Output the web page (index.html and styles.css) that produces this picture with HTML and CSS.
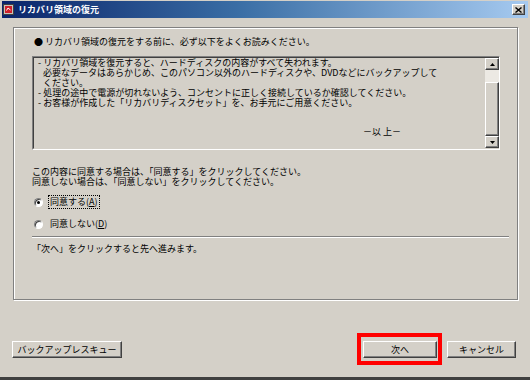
FILE: index.html
```html
<!DOCTYPE html>
<html lang="ja">
<head>
  <meta charset="UTF-8" />
  <title>リカバリ領域の復元</title>
  <link rel="stylesheet" href="styles.css">
</head>
<body>

  <div class="window">
    <!-- Title bar -->
    <div class="titlebar">
      <svg class="app-icon" width="11" height="11" viewBox="0 0 11 11">
        <rect x="0.5" y="0.5" width="10" height="10" fill="#c8c4bc" stroke="#404040"/>
        <rect x="2" y="2" width="7" height="7" fill="#d0202a"/>
        <path d="M3.5 6.5 L5 4 L7.5 6" stroke="#fff" stroke-width="1" fill="none"/>
      </svg>
      <span class="title">リカバリ領域の復元</span>
      <button class="close-btn" type="button">
        <svg width="7" height="6" viewBox="0 0 7 6">
          <path d="M0.5 0.5 L6.5 5.5 M6.5 0.5 L0.5 5.5" stroke="#000" stroke-width="1.4"/>
        </svg>
      </button>
    </div>

    <div class="window-body">
      <!-- Main panel -->
      <div class="panel">
        <p class="lead">● リカバリ領域の復元をする前に、必ず以下をよくお読みください。</p>

        <div class="textbox">
          <div class="textbox-text">
            <div class="line">- リカバリ領域を復元すると、ハードディスクの内容がすべて失われます。</div>
            <div class="line indent">必要なデータはあらかじめ、このパソコン以外のハードディスクや、DVDなどにバックアップして</div>
            <div class="line indent">ください。</div>
            <div class="line">- 処理の途中で電源が切れないよう、コンセントに正しく接続しているか確認してください。</div>
            <div class="line">- お客様が作成した「リカバリディスクセット」を、お手元にご用意ください。</div>
            <div class="line ijou">－以 上－</div>
          </div>
          <div class="scrollbar">
            <div class="sb-btn">
              <svg width="5" height="3" viewBox="0 0 5 3"><path d="M2.5 0 L5 3 L0 3 Z" fill="#000"/></svg>
            </div>
            <div class="sb-track"></div>
            <div class="sb-thumb"></div>
            <div class="sb-btn">
              <svg width="5" height="3" viewBox="0 0 5 3"><path d="M0 0 L5 0 L2.5 3 Z" fill="#000"/></svg>
            </div>
          </div>
        </div>

        <p class="agree-note">
          この内容に同意する場合は、「同意する」をクリックしてください。<br>
          同意しない場合は、「同意しない」をクリックしてください。
        </p>

        <div class="radios">
          <label class="radio">
            <span class="radio-dot checked"></span>
            <span class="radio-label focused">同意する(<u>A</u>)</span>
          </label>
          <label class="radio">
            <span class="radio-dot"></span>
            <span class="radio-label">同意しない(<u>D</u>)</span>
          </label>
        </div>

        <hr class="separator">

        <p class="next-note">「次へ」をクリックすると先へ進みます。</p>
      </div>

      <!-- Buttons -->
      <div class="actions">
        <button class="btn btn-backup" type="button">バックアップレスキュー</button>
        <div class="actions-right">
          <button class="btn btn-next" type="button">次へ</button>
          <button class="btn btn-cancel" type="button">キャンセル</button>
        </div>
      </div>
    </div>
  </div>

</body>
</html>
```

FILE: styles.css
```css
/* === Page === */
body {
  margin: 0;
  background: #d4d0c8;
  font-family: "Noto Sans CJK JP", "Noto Sans", sans-serif;
  font-size: 9px;
  color: #000;
}

p {
  margin: 0;
}

/* === Window === */
.window {
  width: 530px;
  height: 380px;
  box-sizing: border-box;
  padding: 1px 2px 0;
  background: #d4d0c8;
  border-bottom: 3px solid #404040;
  display: flex;
  flex-direction: column;
}

/* === Title bar === */
.titlebar {
  height: 17px;
  display: flex;
  align-items: center;
  padding: 0 3px 0 1px;
  background: linear-gradient(90deg, #0a246a 0%, #3a6ea5 45%, #a6caf0 100%);
}

.app-icon {
  display: block;
  margin-right: 4px;
}

.title {
  color: #fff;
  font-weight: 700;
  font-size: 9px;
  line-height: 17px;
  flex: 1;
}

.close-btn {
  width: 13px;
  height: 11px;
  padding: 0;
  margin: 0;
  background: #d4d0c8;
  border: 1px solid;
  border-color: #fff #404040 #404040 #fff;
  box-shadow: inset -1px -1px #808080;
  display: flex;
  align-items: center;
  justify-content: center;
}

.close-btn svg {
  display: block;
}

/* === Body === */
.window-body {
  flex: 1;
  display: flex;
  flex-direction: column;
  padding: 9px 10px 0 11px;
}

/* === Panel (etched group) === */
.panel {
  width: 505px;
  height: 273px;
  box-sizing: border-box;
  border: 1px solid #808080;
  box-shadow: inset 1px 1px #fff, 1px 1px #fff;
  padding: 8px 17px 0 18px;
}

.lead {
  line-height: 12px;
  padding-left: 2px;
  margin-bottom: 8px;
}

/* === Text box === */
.textbox {
  height: 94px;
  box-sizing: border-box;
  border: 1px solid;
  border-color: #808080 #fff #fff #808080;
  display: flex;
}

.textbox-text {
  flex: 1;
  border: 1px solid;
  border-right: none;
  border-color: #404040 #d4d0c8 #d4d0c8 #404040;
  padding: 0 0 0 4px;
  line-height: 10px;
  white-space: nowrap;
  overflow: hidden;
}

.line.indent {
  padding-left: 5px;
}

.line.ijou {
  margin-top: 19px;
  padding-left: 325px;
}

/* === Scrollbar === */
.scrollbar {
  width: 14px;
  display: flex;
  flex-direction: column;
  border-top: 1px solid #404040;
  border-bottom: 1px solid #d4d0c8;
}

.sb-btn,
.sb-thumb {
  box-sizing: border-box;
  background: #d4d0c8;
  border: 1px solid;
  border-color: #fff #404040 #404040 #fff;
  box-shadow: inset -1px -1px #808080;
}

.sb-btn {
  height: 12px;
  display: flex;
  align-items: center;
  justify-content: center;
}

.sb-btn svg {
  display: block;
}

.sb-track {
  height: 12px;
  background: #ece9e3;
}

.sb-thumb {
  flex: 1;
}

/* === Agreement === */
.agree-note {
  margin-top: 17px;
  line-height: 10px;
}

.radios {
  margin-top: 7px;
  display: flex;
  flex-direction: column;
  gap: 6px;
}

.radio {
  height: 16px;
  display: flex;
  align-items: center;
  padding-left: 2px;
}

.radio-dot {
  width: 9px;
  height: 9px;
  box-sizing: border-box;
  border-radius: 50%;
  background: #fff;
  border: 1px solid;
  border-color: #808080 #fff #fff #808080;
  box-shadow: inset 1px 1px #404040;
  margin-right: 5px;
  position: relative;
}

.radio-dot.checked::after {
  content: "";
  position: absolute;
  left: 2px;
  top: 2px;
  width: 3px;
  height: 3px;
  border-radius: 50%;
  background: #000;
}

.radio-label {
  line-height: 12px;
  padding: 0 1px;
  border: 1px dotted transparent;
}

.radio-label.focused {
  border-color: #000;
}

.separator {
  margin: 4px -9px 0 0;
  height: 0;
  border: none;
  border-top: 1px solid #808080;
  border-bottom: 1px solid #fff;
}

.next-note {
  margin-top: 6px;
  line-height: 10px;
}

/* === Buttons === */
.actions {
  margin-top: 41px;
  margin-left: -1px;
  margin-right: 2px;
  display: flex;
  justify-content: space-between;
}

.actions-right {
  display: flex;
  gap: 10px;
}

.btn {
  height: 17px;
  padding: 0;
  font-family: inherit;
  font-size: 9px;
  color: #000;
  background: #d4d0c8;
  border: 1px solid;
  border-color: #fff #404040 #404040 #fff;
  box-shadow: inset -1px -1px #808080;
  line-height: 14px;
}

.btn-backup {
  width: 110px;
}

.btn-next {
  width: 74px;
  position: relative;
}

/* red highlight frame around "次へ" */
.btn-next::after {
  content: "";
  position: absolute;
  left: -7px;
  top: -9px;
  right: -6px;
  bottom: -8px;
  border: 4px solid #ff0000;
}

.btn-cancel {
  width: 69px;
}
```
